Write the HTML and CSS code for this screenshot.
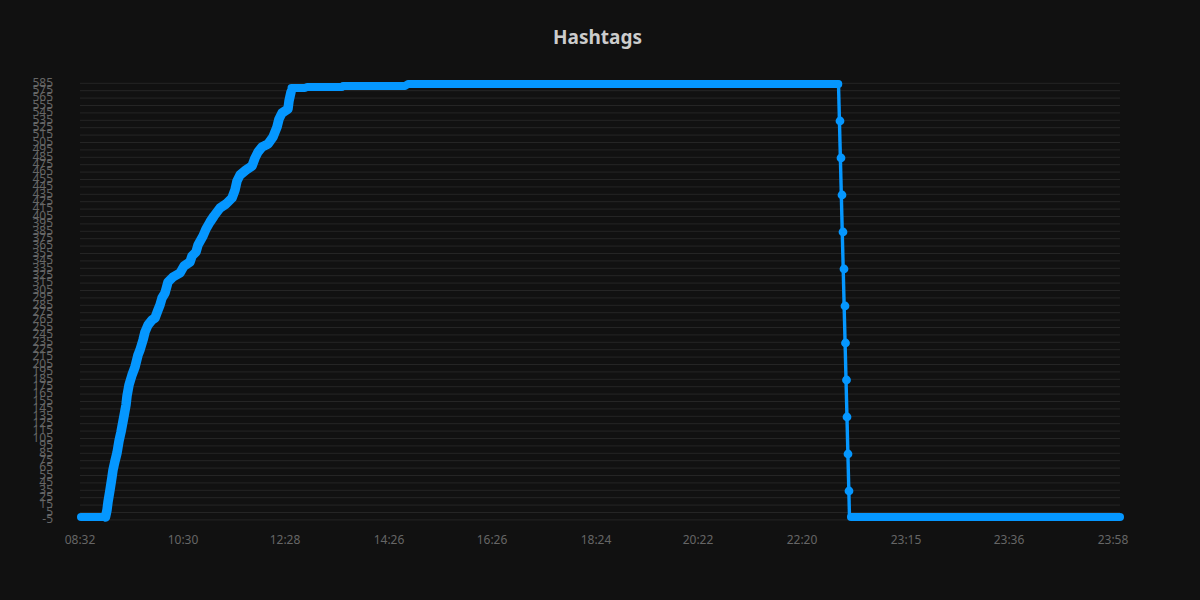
FILE: index.html
```html
<!DOCTYPE html>
<html lang="en">
<head>
<meta charset="utf-8">
<title>Hashtags</title>
<link rel="stylesheet" href="styles.css">
</head>
<body>
<svg class="chart" width="1200" height="600" viewBox="0 0 1200 600">
<text class="title" x="597.5" y="44">Hashtags</text>
<path class="grid" d="M80 83.3H1120M80 90.7H1120M80 98.1H1120M80 105.5H1120M80 112.9H1120M80 120.3H1120M80 127.7H1120M80 135.1H1120M80 142.5H1120M80 149.9H1120M80 157.3H1120M80 164.7H1120M80 172.1H1120M80 179.5H1120M80 186.9H1120M80 194.3H1120M80 201.7H1120M80 209.1H1120M80 216.5H1120M80 223.9H1120M80 231.3H1120M80 238.7H1120M80 246.1H1120M80 253.5H1120M80 260.9H1120M80 268.3H1120M80 275.7H1120M80 283.1H1120M80 290.5H1120M80 297.9H1120M80 305.3H1120M80 312.7H1120M80 320.1H1120M80 327.5H1120M80 334.9H1120M80 342.3H1120M80 349.7H1120M80 357.1H1120M80 364.5H1120M80 371.9H1120M80 379.3H1120M80 386.7H1120M80 394.1H1120M80 401.5H1120M80 408.9H1120M80 416.3H1120M80 423.7H1120M80 431.1H1120M80 438.5H1120M80 445.9H1120M80 453.3H1120M80 460.7H1120M80 468.1H1120M80 475.5H1120M80 482.9H1120M80 490.3H1120M80 497.7H1120M80 505.1H1120M80 512.5H1120M80 519.9H1120"/>
<g class="y-labels">
<text x="53" y="86.5">585</text><text x="53" y="93.9">575</text><text x="53" y="101.3">565</text><text x="53" y="108.7">555</text><text x="53" y="116.1">545</text><text x="53" y="123.5">535</text><text x="53" y="130.9">525</text><text x="53" y="138.3">515</text><text x="53" y="145.7">505</text><text x="53" y="153.1">495</text>
<text x="53" y="160.5">485</text><text x="53" y="167.9">475</text><text x="53" y="175.3">465</text><text x="53" y="182.7">455</text><text x="53" y="190.1">445</text><text x="53" y="197.5">435</text><text x="53" y="204.9">425</text><text x="53" y="212.3">415</text><text x="53" y="219.7">405</text><text x="53" y="227.1">395</text>
<text x="53" y="234.5">385</text><text x="53" y="241.9">375</text><text x="53" y="249.3">365</text><text x="53" y="256.7">355</text><text x="53" y="264.1">345</text><text x="53" y="271.5">335</text><text x="53" y="278.9">325</text><text x="53" y="286.3">315</text><text x="53" y="293.7">305</text><text x="53" y="301.1">295</text>
<text x="53" y="308.5">285</text><text x="53" y="315.9">275</text><text x="53" y="323.3">265</text><text x="53" y="330.7">255</text><text x="53" y="338.1">245</text><text x="53" y="345.5">235</text><text x="53" y="352.9">225</text><text x="53" y="360.3">215</text><text x="53" y="367.7">205</text><text x="53" y="375.1">195</text>
<text x="53" y="382.5">185</text><text x="53" y="389.9">175</text><text x="53" y="397.3">165</text><text x="53" y="404.7">155</text><text x="53" y="412.1">145</text><text x="53" y="419.5">135</text><text x="53" y="426.9">125</text><text x="53" y="434.3">115</text><text x="53" y="441.7">105</text><text x="53" y="449.1">95</text>
<text x="53" y="456.5">85</text><text x="53" y="463.9">75</text><text x="53" y="471.3">65</text><text x="53" y="478.7">55</text><text x="53" y="486.1">45</text><text x="53" y="493.5">35</text><text x="53" y="500.9">25</text><text x="53" y="508.3">15</text><text x="53" y="515.7">5</text><text x="53" y="523.1">-5</text>
</g>
<g class="x-labels">
<text x="80" y="544">08:32</text><text x="183" y="544">10:30</text><text x="285" y="544">12:28</text><text x="389" y="544">14:26</text><text x="492" y="544">16:26</text><text x="596" y="544">18:24</text><text x="698" y="544">20:22</text><text x="802" y="544">22:20</text><text x="906" y="544">23:15</text><text x="1009" y="544">23:36</text><text x="1113" y="544">23:58</text>
</g>
<polyline class="line-thin" points="838.5,84 849.5,517"/>
<polyline class="line-curve" points="105.5,517 107,510 108,502 110,490 112,477 113,470 115,461 117,453 119,441 121,432 124,416 126,405 127,396 129,385 132,375 135,367 138,355 140,350 143,340 145,332 148,325 152,320 155,318 158,310 160,305 162,298 165,293 168,282 173,277 180,273 184,266 190,262 192,256 196,252 198,245 203,236 206,229 210,222 214,216 220,208 226,204 232,198 235,190 237,181 240,175 246,170 252,166 255,158 258,152 262,147 268,144 273,137 277,127 279,119 282,113 288,109 289,101 291,92"/>
<polyline class="line-thick" points="81,517 105.5,517"/>
<polyline class="line-thick" points="291.5,88 305,88 307,87 342,87 343,86 405,86 408,84 838,84"/>
<polyline class="line-thick" points="851,517 1120,517"/>
<g class="dots">
<circle cx="838.5" cy="84" r="3.8"/><circle cx="840" cy="121" r="4.4"/><circle cx="841" cy="158" r="4.4"/><circle cx="842" cy="195" r="4.4"/><circle cx="843" cy="232" r="4.4"/><circle cx="844" cy="269" r="4.4"/><circle cx="845" cy="306" r="4.4"/><circle cx="845.5" cy="343" r="4.4"/><circle cx="846.5" cy="380" r="4.4"/><circle cx="847" cy="417" r="4.4"/><circle cx="848" cy="454" r="4.4"/><circle cx="849" cy="491" r="4.4"/>
</g>
</svg>
</body>
</html>
```
FILE: styles.css
```css
html, body {
  margin: 0;
  padding: 0;
  background: #111111;
}

.chart {
  display: block;
  font-family: "Noto Sans", "Open Sans", sans-serif;
}

.title {
  font-size: 19px;
  font-weight: 700;
  fill: #cccccc;
  text-anchor: middle;
}

.grid {
  fill: none;
  stroke: #252525;
  stroke-width: 1;
}

.y-labels text {
  font-size: 12px;
  fill: #666666;
  text-anchor: end;
}

.x-labels text {
  font-size: 12px;
  fill: #666666;
  text-anchor: middle;
}

.line-thin {
  fill: none;
  stroke: #0597ff;
  stroke-width: 3.4;
}

.line-thick {
  fill: none;
  stroke: #0597ff;
  stroke-width: 8;
  stroke-linecap: round;
  stroke-linejoin: round;
}

.line-curve {
  fill: none;
  stroke: #0597ff;
  stroke-width: 9.5;
  stroke-linecap: round;
  stroke-linejoin: round;
}

.dots circle {
  fill: #0597ff;
}
```
